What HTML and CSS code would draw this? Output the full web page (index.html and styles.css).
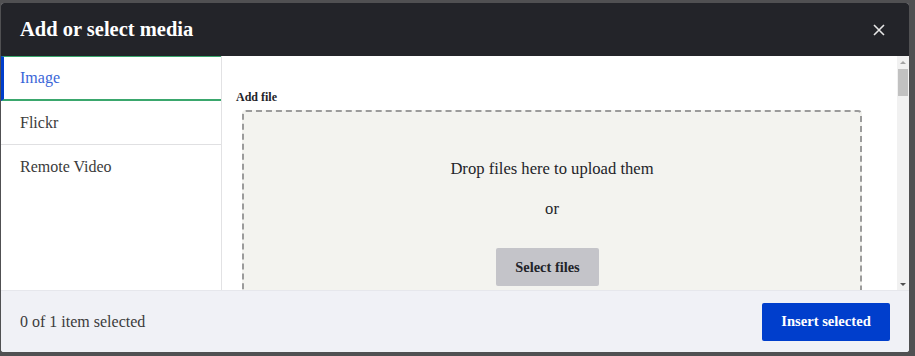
FILE: index.html
```html
<!DOCTYPE html>
<html lang="en">
<head>
    <meta charset="UTF-8">
    <meta name="viewport" content="width=device-width, initial-scale=1.0">
    <title>Add or select media</title>
    <link rel="stylesheet" href="styles.css">
</head>
<body>
    <div class="dialog">
        <div class="dialog-head">
            <h2 class="dialog-title">Add or select media</h2>
            <button class="dialog-close" title="Close">
                <svg width="12" height="12" viewBox="0 0 12 12">
                    <path d="M1 1 L11 11 M11 1 L1 11" stroke="#e6e6e6" stroke-width="1.6" fill="none"/>
                </svg>
            </button>
        </div>
        <div class="dialog-body">
            <ul class="tabs">
                <li class="tab active">Image</li>
                <li class="tab">Flickr</li>
                <li class="tab">Remote Video</li>
            </ul>
            <div class="pane">
                <label class="field-label">Add file</label>
                <div class="dropzone">
                    <p class="drop-msg">Drop files here to upload them</p>
                    <p class="drop-or">or</p>
                    <button class="btn-select">Select files</button>
                </div>
            </div>
            <!-- fake scrollbar, the headless browser hides the real one -->
            <div class="scrollbar">
                <span class="arrow up"></span>
                <div class="track"><div class="thumb"></div></div>
                <span class="arrow down"></span>
            </div>
        </div>
        <div class="dialog-foot">
            <span class="count">0 of 1 item selected</span>
            <button class="btn-insert">Insert selected</button>
        </div>
    </div>
</body>
</html>
```

FILE: styles.css
```css
html,body{
    margin:0;
    padding:0;
}
body{
    background:#505052;
    font-family:"Liberation Serif","DejaVu Serif",serif;
    color:#232429;
    overflow:hidden;
}
.dialog{
    width:908px;
    height:349px;
    margin:3px 0 0 1px;
    background:#fff;
    border-radius:3px;
    overflow:hidden;
    display:flex;
    flex-direction:column;
}
.dialog-head{
    height:53px;
    flex:none;
    background:#232429;
    display:flex;
    align-items:center;
    justify-content:space-between;
    padding:0 24px 0 19px;
}
.dialog-title{
    margin:0;
    color:#fff;
    font-size:20.5px;
    font-weight:bold;
}
.dialog-close{
    background:none;
    border:0;
    padding:0;
    width:12px;
    height:12px;
    display:flex;
    cursor:pointer;
}
.dialog-body{
    flex:1;
    display:flex;
    min-height:0;
}
.tabs{
    list-style:none;
    margin:0;
    padding:0;
    width:220px;
    flex:none;
    border-right:1px solid #e2e2e4;
}
.tab{
    box-sizing:border-box;
    height:44px;
    padding-left:19px;
    display:flex;
    align-items:center;
    font-size:16px;
    color:#3b3b3b;
    border-bottom:1px solid #e0e0e2;
}
.tab.active{
    height:45px;
    padding-left:16px;
    color:#3a66d8;
    border-left:3px solid #003ecc;
    border-top:1px solid #3aa76d;
    border-bottom:2px solid #3aa76d;
}
.tab:last-child{
    border-bottom:0;
}
.pane{
    flex:1;
    overflow:hidden;
    padding:34px 35px 0 14px;
}
.field-label{
    display:block;
    font-size:12px;
    font-weight:bold;
    line-height:14px;
    margin-bottom:6px;
}
.dropzone{
    margin-left:6px;
    height:240px;
    background:#f3f3ef;
    border:2px dashed #9b9b9b;
    border-radius:4px;
    display:flex;
    flex-direction:column;
    align-items:center;
    padding-top:47px;
    box-sizing:border-box;
}
.drop-msg{
    margin:0;
    font-size:16.6px;
    line-height:20px;
}
.drop-or{
    margin:20px 0 0;
    font-size:16.6px;
    line-height:20px;
}
.btn-select{
    margin:29px 9px 0 0;
    width:103px;
    height:38px;
    border:0;
    border-radius:2px;
    background:#c4c4c9;
    font-family:inherit;
    font-size:14.4px;
    font-weight:bold;
    color:#232429;
}
.scrollbar{
    width:12px;
    flex:none;
    background:#f1f1f1;
    display:flex;
    flex-direction:column;
}
.track{
    flex:1;
    padding-top:1px;
}
.thumb{
    height:27px;
    margin:0 1px;
    background:#c1c1c1;
}
.arrow{
    height:12px;
    flex:none;
    display:flex;
    justify-content:center;
    align-items:center;
}
.arrow::before{
    content:"";
    border-left:3.5px solid transparent;
    border-right:3.5px solid transparent;
}
.arrow.up::before{
    border-bottom:3.5px solid #a3a3a3;
}
.arrow.down::before{
    border-top:3.5px solid #505050;
}
.dialog-foot{
    height:62px;
    flex:none;
    background:#f0f1f6;
    display:flex;
    align-items:center;
    justify-content:space-between;
    padding:0 19px 0 19px;
    border-top:1px solid #e6e7ec;
    box-sizing:border-box;
}
.count{
    font-size:16px;
    color:#3b3b3b;
}
.btn-insert{
    width:128px;
    height:38px;
    border:0;
    border-radius:2px;
    background:#003ecc;
    color:#fff;
    font-family:inherit;
    font-size:14.6px;
    font-weight:bold;
}
```
